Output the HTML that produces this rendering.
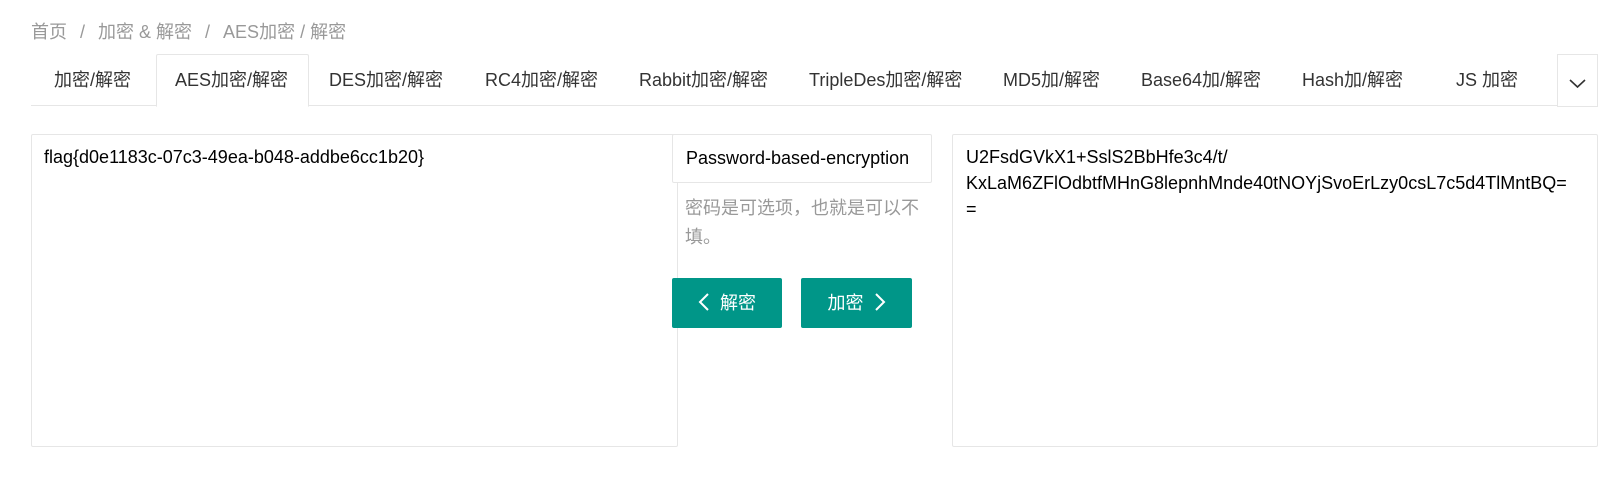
<!DOCTYPE html>
<html><head><meta charset="utf-8"><style>
*{margin:0;padding:0;box-sizing:border-box}
body{width:1622px;height:481px;background:#fff;font-family:"Liberation Sans","Noto Sans CJK SC",sans-serif;font-size:18px;color:#000;position:relative;overflow:hidden}
.a{position:absolute;white-space:nowrap}
.bc{top:18px;left:31px;color:#999;font-size:18px}
.bc i{font-style:normal;margin:0 13px}
.tabline{left:31px;top:105px;width:1527px;height:1px;background:#e6e6e6}
.tab{top:54px;height:52px;line-height:52px;color:#333}
.act{left:156px;top:54px;width:153px;height:53px;border:1px solid #e6e6e6;border-bottom:1px solid #fff;border-radius:2px 2px 0 0;background:#fff}
.dd{left:1557px;top:54px;width:41px;height:53px;border:1px solid #e6e6e6;background:#fff}
.box{border:1px solid #e6e6e6;border-radius:2px;background:#fff}
.btn{background:#009688;color:#fff;border-radius:2px;height:50px;line-height:50px;text-align:center;font-size:18px}
.btn svg{vertical-align:-2px}
</style></head><body>
<div class="a bc">首页<i>/</i>加密 &amp; 解密<i>/</i>AES加密 / 解密</div>
<div class="a tabline"></div>
<div class="a act"></div>
<div class="a tab" style="left:54px">加密/解密</div>
<div class="a tab" style="left:175px">AES加密/解密</div>
<div class="a tab" style="left:329px">DES加密/解密</div>
<div class="a tab" style="left:485px">RC4加密/解密</div>
<div class="a tab" style="left:639px">Rabbit加密/解密</div>
<div class="a tab" style="left:809px">TripleDes加密/解密</div>
<div class="a tab" style="left:1003px">MD5加/解密</div>
<div class="a tab" style="left:1141px">Base64加/解密</div>
<div class="a tab" style="left:1302px">Hash加/解密</div>
<div class="a tab" style="left:1456px">JS 加密</div>
<div class="a dd"><svg width="41" height="53" style="position:absolute;left:-1px;top:-1px"><path d="M13 26 L20.5 33 L28 26" fill="none" stroke="#333" stroke-width="1.6"/></svg></div>

<div class="a box" style="left:31px;top:134px;width:647px;height:313px"></div>
<div class="a" style="left:44px;top:144px;line-height:26px">flag{d0e1183c-07c3-49ea-b048-addbe6cc1b20}</div>

<div class="a box" style="left:672px;top:134px;width:260px;height:49px;line-height:47px;padding-left:13px">Password-based-encryption</div>
<div class="a" style="left:685px;top:194px;color:#999;line-height:29px;white-space:normal;width:245px">密码是可选项，也就是可以不填。</div>

<div class="a btn" style="left:672px;top:278px;width:110px"><svg width="12" height="18"><path d="M10 1 L2 9 L10 17" fill="none" stroke="#fff" stroke-width="2"/></svg>&nbsp; 解密</div>
<div class="a btn" style="left:801px;top:278px;width:111px">加密 &nbsp;<svg width="12" height="18"><path d="M2 1 L10 9 L2 17" fill="none" stroke="#fff" stroke-width="2"/></svg></div>

<div class="a box" style="left:952px;top:134px;width:646px;height:313px"></div>
<div class="a" style="left:966px;top:144px;line-height:26px">U2FsdGVkX1+SslS2BbHfe3c4/t/<br>KxLaM6ZFlOdbtfMHnG8lepnhMnde40tNOYjSvoErLzy0csL7c5d4TlMntBQ=<br>=</div>
</body></html>
